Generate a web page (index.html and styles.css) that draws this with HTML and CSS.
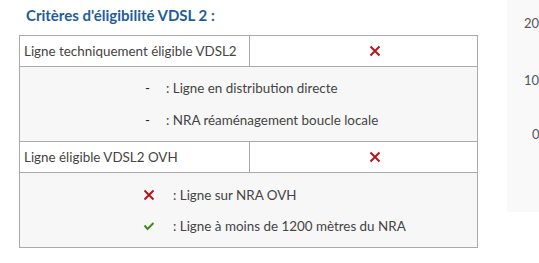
FILE: index.html
```html
<!DOCTYPE html>
<html>
<head>
<meta charset="utf-8">
<link rel="stylesheet" href="styles.css">
</head>
<body>
<div class="page">
  <div class="main">
    <h3 class="title">Critères d'éligibilité VDSL 2 :</h3>
    <table class="crit">
      <colgroup><col class="c1"><col class="c2"></colgroup>
      <tr class="row">
        <td class="label">Ligne techniquement éligible VDSL2</td>
        <td class="val"><svg class="ico" width="12" height="12" viewBox="0 0 12 12"><path d="M1.5 1.5 L10.5 10.5 M10.5 1.5 L1.5 10.5" stroke="#b8151b" stroke-width="2"/></svg></td>
      </tr>
      <tr class="legend">
        <td colspan="2">
          <div class="items">
            <div class="item"><span class="sym dash">-</span><span>: Ligne en distribution directe</span></div>
            <div class="item"><span class="sym dash">-</span><span>: NRA réaménagement boucle locale</span></div>
          </div>
        </td>
      </tr>
      <tr class="row">
        <td class="label">Ligne éligible VDSL2 OVH</td>
        <td class="val"><svg class="ico" width="12" height="12" viewBox="0 0 12 12"><path d="M1.5 1.5 L10.5 10.5 M10.5 1.5 L1.5 10.5" stroke="#b8151b" stroke-width="2"/></svg></td>
      </tr>
      <tr class="legend">
        <td colspan="2">
          <div class="items items2">
            <div class="item"><span class="sym sym2"><svg width="12" height="12" viewBox="0 0 12 12"><path d="M1.5 1.5 L10.5 10.5 M10.5 1.5 L1.5 10.5" stroke="#b8151b" stroke-width="2"/></svg></span><span>: Ligne sur NRA OVH</span></div>
            <div class="item"><span class="sym sym2"><svg width="12" height="10" viewBox="0 0 12 10"><path d="M1.5 4.5 L4.5 8 L10.5 2" fill="none" stroke="#3f8c1f" stroke-width="2"/></svg></span><span>: Ligne à moins de 1200 mètres du NRA</span></div>
          </div>
        </td>
      </tr>
    </table>
  </div>
  <div class="side">
    <span class="tick t20">20</span>
    <span class="tick t10">10</span>
    <span class="tick t0">0</span>
  </div>
</div>
</body>
</html>
```
FILE: styles.css
```css
html, body {
  margin: 0;
  padding: 0;
  background: #fff;
}
body {
  font-family: Lato, "Open Sans", sans-serif;
  color: #444;
  font-size: 13.4px;
}
.page {
  display: flex;
  width: 539px;
  height: 263px;
  overflow: hidden;
}
.main {
  width: 478px;
  padding-left: 19px;
  box-sizing: border-box;
}
.title {
  margin: 5px 0 0 7px;
  height: 30px;
  font-size: 15px;
  font-weight: 700;
  color: #1d5c9e;
  line-height: 20px;
}
.crit {
  border-collapse: collapse;
  table-layout: fixed;
  width: 459px;
}
.c1 { width: 230px; }
.crit td {
  border: 1px solid #aaa;
  padding: 0;
  white-space: nowrap;
}
.row td {
  height: 30px;
  background: #fff;
}
.label {
  padding-left: 4px !important;
  line-height: 30px;
}
.val {
  text-align: center;
  padding-left: 22px !important;
}
.ico {
  display: inline-block;
  vertical-align: middle;
  margin-top: -4px;
}
.legend td {
  background: #f7f7f7;
  height: 74px;
}
.items {
  display: flex;
  flex-direction: column;
  gap: 10px;
  padding-left: 125px;
}
.item {
  display: flex;
  align-items: center;
  line-height: 22px;
}
.sym {
  display: inline-flex;
  align-items: center;
}
.dash {
  width: 21px;
  color: #222;
}
.items2 {
  padding-left: 123px;
  gap: 9px;
}
.sym2 {
  width: 30px;
}
.side {
  margin-left: 29px;
  width: 40px;
  height: 212px;
  background: #f9f9f9;
  position: relative;
  color: #555;
  font-size: 13px;
}
.tick {
  position: absolute;
}
.t20 { left: 17px; top: 15px; }
.t10 { left: 17px; top: 72px; }
.t0 { left: 25px; top: 126px; }
```
